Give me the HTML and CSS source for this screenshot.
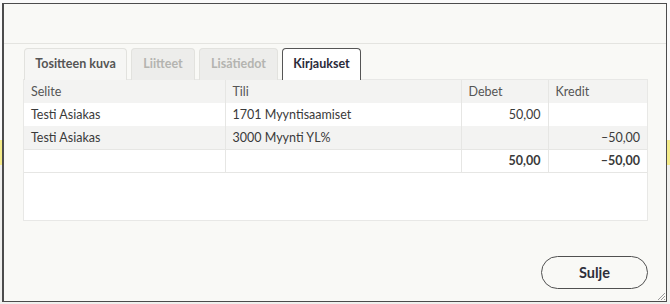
FILE: index.html
```html
<!DOCTYPE html>
<html lang="fi">
<head>
  <meta charset="UTF-8">
  <title>Tosite</title>
  <link rel="stylesheet" href="styles.css">
</head>
<body>
  <div class="dialog">
    <div class="dialog-header"></div>
    <div class="dialog-body">
      <div class="tabs">
        <div class="tab tab-image">Tositteen kuva</div>
        <div class="tab tab-attachments disabled">Liitteet</div>
        <div class="tab tab-details disabled">Lisätiedot</div>
        <div class="tab tab-entries active">Kirjaukset</div>
      </div>
      <div class="entries">
        <table class="entries-table">
          <thead>
            <tr>
              <th class="col-desc">Selite</th>
              <th class="col-account">Tili</th>
              <th class="col-debit">Debet</th>
              <th>Kredit</th>
            </tr>
          </thead>
          <tbody>
            <tr>
              <td>Testi Asiakas</td>
              <td>1701 Myyntisaamiset</td>
              <td class="num">50,00</td>
              <td class="num"></td>
            </tr>
            <tr class="alt">
              <td>Testi Asiakas</td>
              <td>3000 Myynti YL%</td>
              <td class="num"></td>
              <td class="num">–50,00</td>
            </tr>
            <tr class="total">
              <td></td>
              <td></td>
              <td class="num">50,00</td>
              <td class="num">–50,00</td>
            </tr>
          </tbody>
        </table>
      </div>
    </div>
    <div class="dialog-footer">
      <button class="btn-close">Sulje</button>
    </div>
    <svg class="resize-grip" width="8" height="8" viewBox="0 0 8 8">
      <path d="M8 1 L1 8 M8 4 L4 8 M8 7 L7 8" stroke="#9a9a9a" stroke-width="1"/>
    </svg>
  </div>
</body>
</html>
```

FILE: styles.css
```css
html, body {
  margin: 0;
  padding: 0;
}
body {
  width: 670px;
  height: 304px;
  overflow: hidden;
  background: linear-gradient(180deg, #fafafa 0, #fafafa 140px, #f5ec8a 140px, #f5ec8a 165px, #f0f0ee 165px);
  font-family: "Lato", "Open Sans", sans-serif;
  color: #3a3a3a;
}

.dialog {
  position: relative;
  box-sizing: border-box;
  width: 665px;
  height: 299px;
  margin: 3px 0 0 2px;
  background: #f9f9f6;
  border: 1px solid #4c4c4c;
  border-left-width: 2px;
  display: flex;
  flex-direction: column;
}

.dialog-header {
  height: 39px;
  border-bottom: 1px solid #e4e4e0;
}

.dialog-body {
  padding: 4px 18px 0 19px;
}

.tabs {
  display: flex;
  gap: 4px;
  padding-left: 1px;
  height: 32px;
  position: relative;
  z-index: 2;
}
.tab {
  box-sizing: border-box;
  height: 32px;
  font-size: 12.5px;
  font-weight: 700;
  line-height: 29px;
  text-align: center;
  color: #555;
  background: #f6f6f4;
  border: 1px solid #e2e2de;
  border-bottom: none;
  border-radius: 4px 4px 0 0;
}
.tab-image { width: 103px; }
.tab-attachments { width: 64px; }
.tab-details { width: 79px; }
.tab-entries { width: 79px; }
.tab.disabled {
  color: #b4b4b0;
  background: #ededeb;
}
.tab.active {
  background: #fff;
  color: #2a2a3a;
  border-color: #555;
}

.entries {
  box-sizing: border-box;
  height: 142px;
  margin-top: -1px;
  background: #fff;
  border: 1px solid #e8e8e6;
}
.entries-table {
  width: 100%;
  border-collapse: collapse;
  font-size: 12.5px;
}
.entries-table th,
.entries-table td {
  height: 23px;
  padding: 0 7px;
  border-left: 1px solid #e6e6e4;
  text-align: left;
  font-weight: 400;
  box-sizing: border-box;
}
.entries-table th:first-child,
.entries-table td:first-child {
  border-left: none;
}
.entries-table thead tr {
  background: #f3f3f2;
  color: #555;
}
.col-desc { width: 201px; }
.col-account { width: 236px; }
.col-debit { width: 87px; }
.entries-table tr.alt {
  background: #f3f3f2;
}
.entries-table td.num {
  text-align: right;
}
.entries-table tr.alt td,
.entries-table tr.total td {
  border-bottom: 1px solid #e6e6e4;
}
.entries-table tr.total td {
  font-weight: 700;
}

.dialog-footer {
  margin-top: auto;
  padding: 0 18px 12px 0;
  display: flex;
  justify-content: flex-end;
}
.btn-close {
  width: 107px;
  height: 33px;
  border: 1px solid #505050;
  border-radius: 17px;
  background: transparent;
  font-family: "Lato", "Open Sans", sans-serif;
  font-size: 14.5px;
  font-weight: 700;
  color: #2e2e3a;
  cursor: pointer;
}

.resize-grip {
  position: absolute;
  right: 1px;
  bottom: 1px;
}
```
